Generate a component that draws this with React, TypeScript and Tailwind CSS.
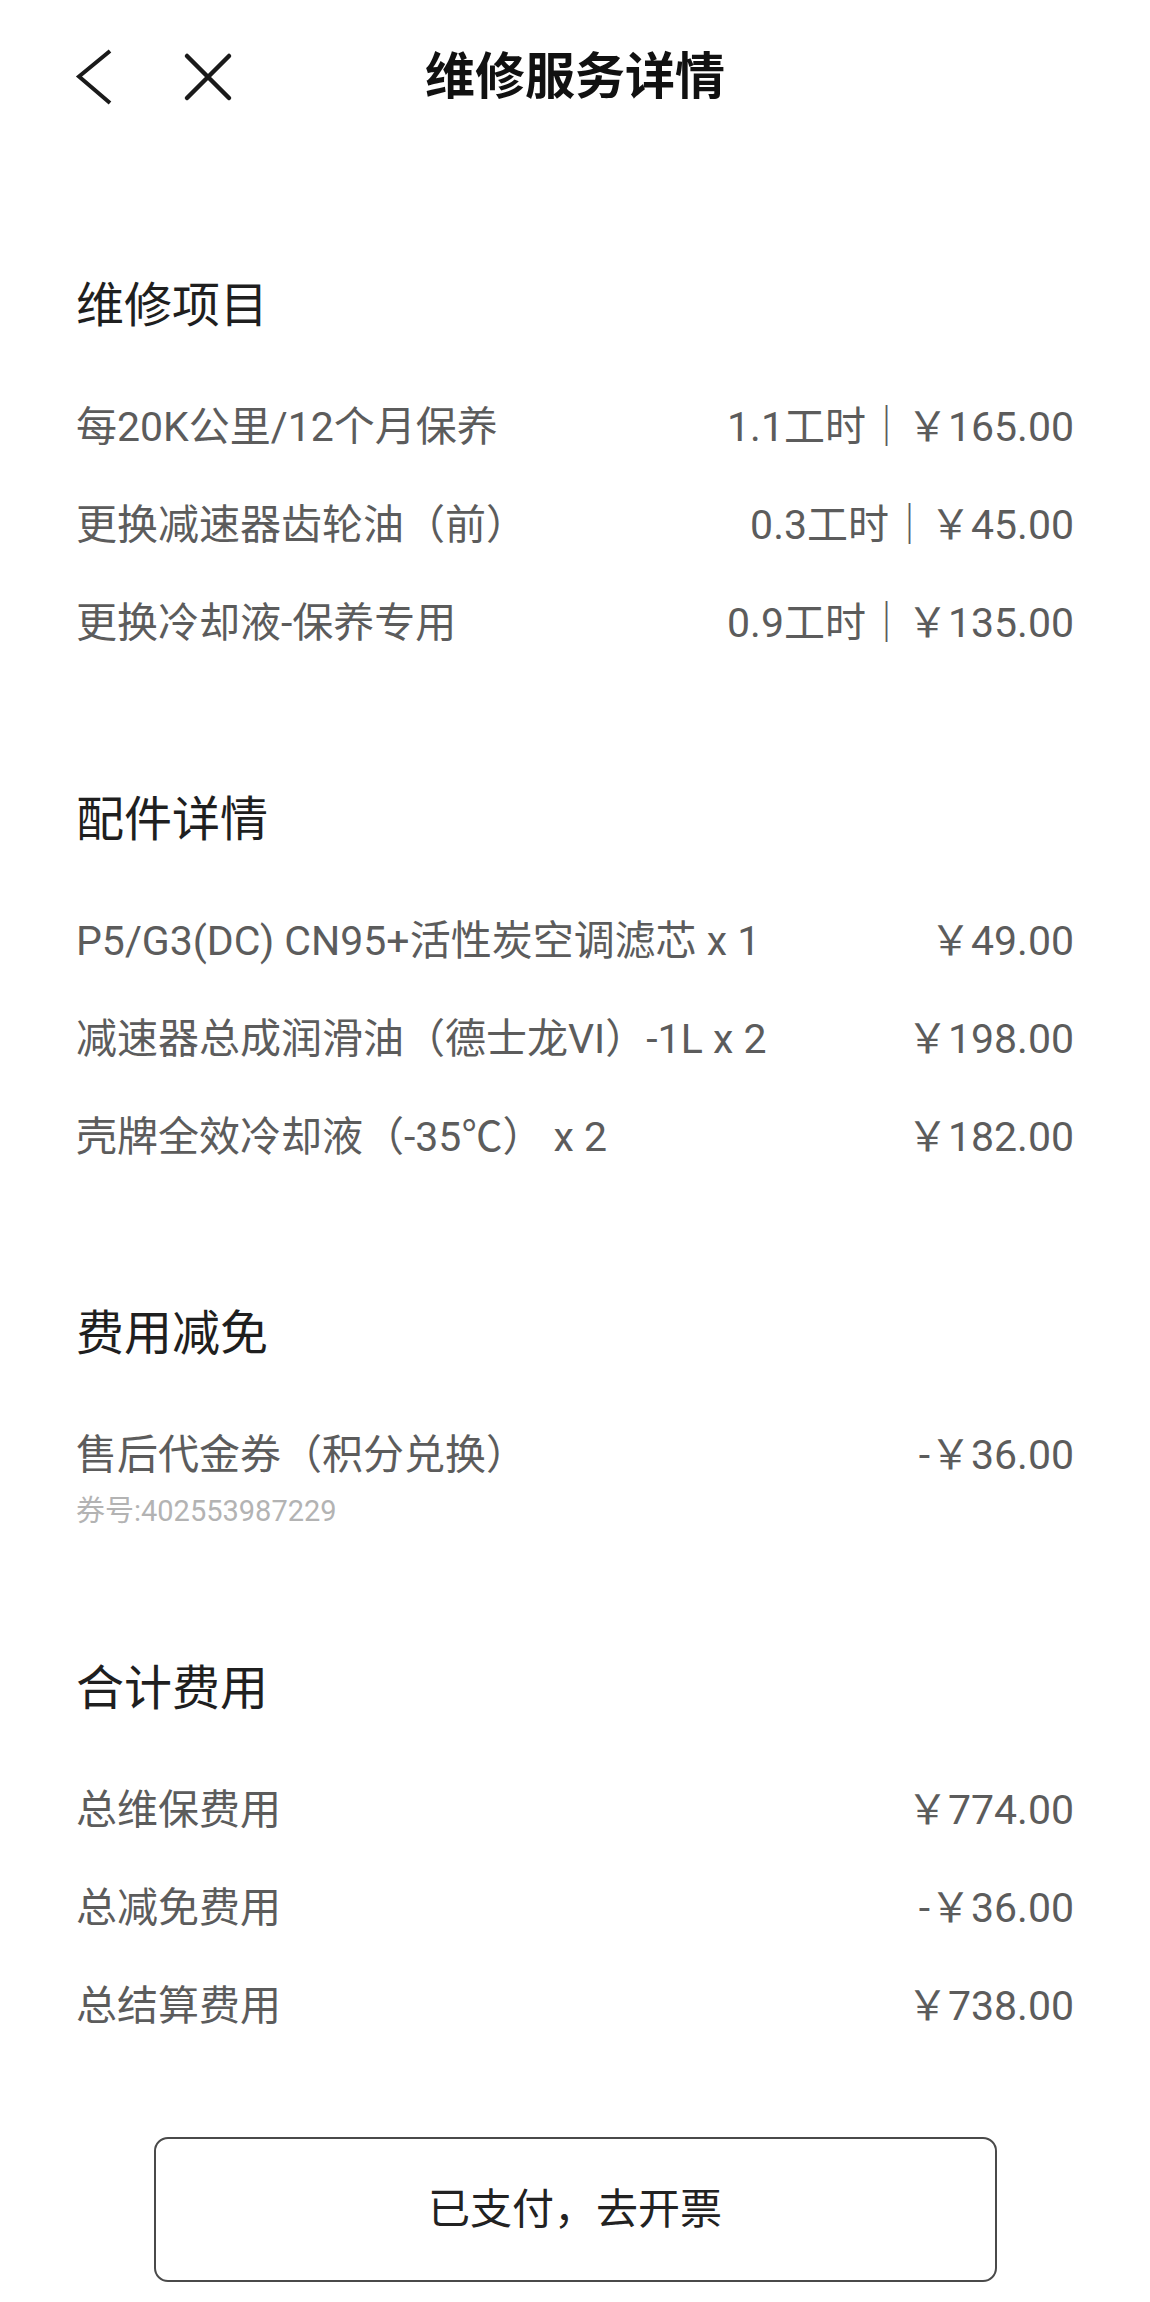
import React from "react";

type Row = { label: string; value: string };

const repairItems: Row[] = [
  { label: "每20K公里/12个月保养", value: "1.1工时｜￥165.00" },
  { label: "更换减速器齿轮油（前）", value: "0.3工时｜￥45.00" },
  { label: "更换冷却液-保养专用", value: "0.9工时｜￥135.00" },
];

const parts: Row[] = [
  { label: "P5/G3(DC) CN95+活性炭空调滤芯 x 1", value: "￥49.00" },
  { label: "减速器总成润滑油（德士龙VI）-1L x 2", value: "￥198.00" },
  { label: "壳牌全效冷却液（-35℃） x 2", value: "￥182.00" },
];

const totals: Row[] = [
  { label: "总维保费用", value: "￥774.00" },
  { label: "总减免费用", value: "-￥36.00" },
  { label: "总结算费用", value: "￥738.00" },
];

const font = {
  fontFamily: 'Roboto, "Noto Sans CJK SC", "Noto Sans", sans-serif',
};

const SectionTitle = ({ children }: { children: React.ReactNode }) => (
  <div className="h-[98px] mb-[24px] flex items-center text-[48px] text-[#1f1f1f]">
    {children}
  </div>
);

const LineRow = ({ row }: { row: Row }) => (
  <div className="h-[98px] flex items-center justify-between text-[41px] text-[#5c5c5c]">
    <span>{row.label}</span>
    <span>{row.value}</span>
  </div>
);

export default function App() {
  return (
    <div className="w-[1150px] min-h-[2302px] bg-white" style={font}>
      {/* header */}
      <header className="h-[154px] grid grid-cols-[1fr_auto_1fr] items-center">
        <div className="flex items-center gap-[66px] pl-[74px]">
          <svg width="40" height="60" viewBox="0 0 40 60" fill="none">
            <path d="M36 4 L5 29.5 L36 56" stroke="#1a1a1a" strokeWidth="4" strokeLinejoin="miter" />
          </svg>
          <svg width="56" height="60" viewBox="0 0 56 60" fill="none">
            <path d="M7 9 L49 51 M49 9 L7 51" stroke="#1a1a1a" strokeWidth="4.5" strokeLinecap="round" />
          </svg>
        </div>
        <h1 className="text-[50px] font-bold text-[#111]">维修服务详情</h1>
        <div />
      </header>

      <main className="px-[76px] pt-[103px] pb-[20px]">
        <section>
          <SectionTitle>维修项目</SectionTitle>
          {repairItems.map((r) => (
            <LineRow key={r.label} row={r} />
          ))}
        </section>

        <section className="mt-[98px]">
          <SectionTitle>配件详情</SectionTitle>
          {parts.map((r) => (
            <LineRow key={r.label} row={r} />
          ))}
        </section>

        <section className="mt-[98px]">
          <SectionTitle>费用减免</SectionTitle>
          <div className="pt-[27px]">
            <div className="h-[44px] flex items-center justify-between text-[41px] text-[#5c5c5c]">
              <span>售后代金券（积分兑换）</span>
              <span>-￥36.00</span>
            </div>
            <div className="mt-[20px] h-[28px] flex items-center text-[29px] text-[#b3b3b3]">
              券号:402553987229
            </div>
          </div>
        </section>

        <section className="mt-[114px]">
          <SectionTitle>合计费用</SectionTitle>
          {totals.map((r) => (
            <LineRow key={r.label} row={r} />
          ))}
        </section>

        <div className="mt-[81px] flex justify-center">
          <button className="w-[843px] h-[145px] rounded-[14px] border-2 border-[#4a4a4a] bg-white text-[42px] text-[#222]">
            已支付，去开票
          </button>
        </div>
      </main>
    </div>
  );
}
